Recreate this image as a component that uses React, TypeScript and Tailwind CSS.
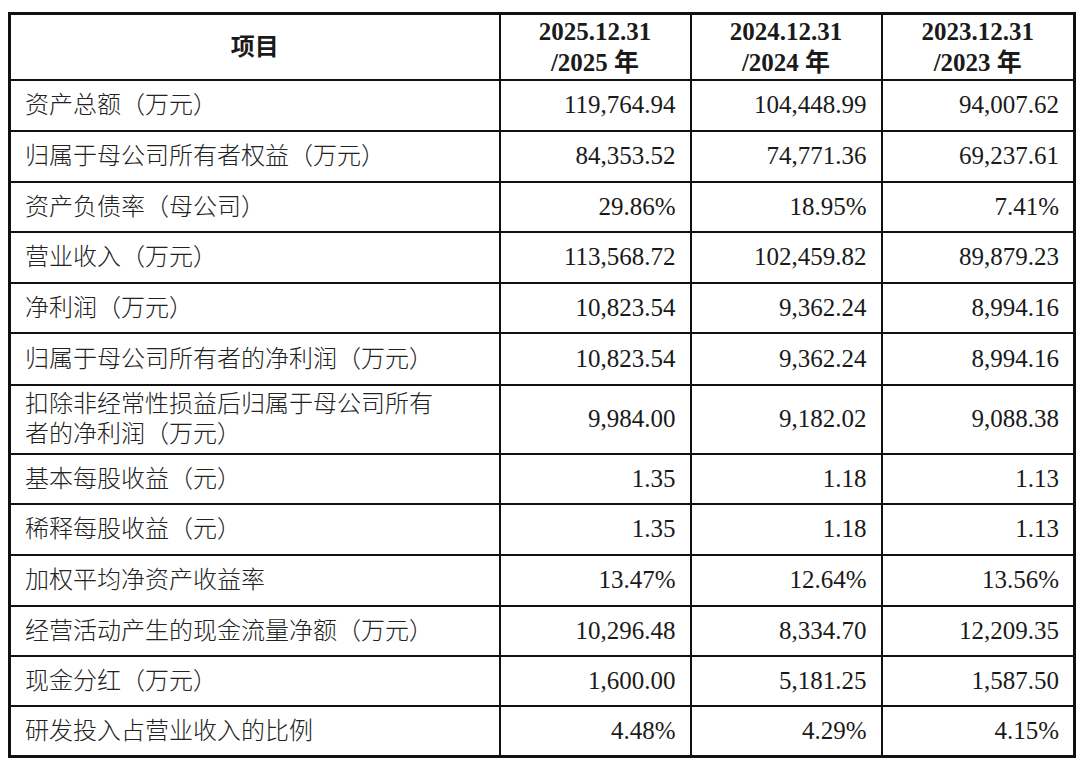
import React from "react";

type Row = { label: string; v: [string, string, string]; h: number };

const rows: Row[] = [
  { label: "资产总额（万元）", v: ["119,764.94", "104,448.99", "94,007.62"], h: 51 },
  { label: "归属于母公司所有者权益（万元）", v: ["84,353.52", "74,771.36", "69,237.61"], h: 51 },
  { label: "资产负债率（母公司）", v: ["29.86%", "18.95%", "7.41%"], h: 50 },
  { label: "营业收入（万元）", v: ["113,568.72", "102,459.82", "89,879.23"], h: 51 },
  { label: "净利润（万元）", v: ["10,823.54", "9,362.24", "8,994.16"], h: 50 },
  { label: "归属于母公司所有者的净利润（万元）", v: ["10,823.54", "9,362.24", "8,994.16"], h: 52 },
  { label: "扣除非经常性损益后归属于母公司所有者的净利润（万元）", v: ["9,984.00", "9,182.02", "9,088.38"], h: 69 },
  { label: "基本每股收益（元）", v: ["1.35", "1.18", "1.13"], h: 50 },
  { label: "稀释每股收益（元）", v: ["1.35", "1.18", "1.13"], h: 51 },
  { label: "加权平均净资产收益率", v: ["13.47%", "12.64%", "13.56%"], h: 51 },
  { label: "经营活动产生的现金流量净额（万元）", v: ["10,296.48", "8,334.70", "12,209.35"], h: 50 },
  { label: "现金分红（万元）", v: ["1,600.00", "5,181.25", "1,587.50"], h: 50 },
  { label: "研发投入占营业收入的比例", v: ["4.48%", "4.29%", "4.15%"], h: 51 },
];

const rowH: Record<number, string> = {
  50: "h-[50px]",
  51: "h-[51px]",
  52: "h-[52px]",
  69: "h-[69px]",
};

const heads = [
  ["2025.12.31", "/2025"],
  ["2024.12.31", "/2024"],
  ["2023.12.31", "/2023"],
];

export default function App() {
  return (
    <div
      className="w-[1080px] h-[772px] bg-white pl-[8px] pt-[12px]"
      style={{ fontFamily: '"Liberation Serif", "Noto Sans CJK SC", serif' }}
    >
      <table className="border-collapse border-[3px] border-[#111] text-[#1a1a1a] w-[1065px] table-fixed">
        <colgroup>
          <col className="w-[490px]" />
          <col className="w-[191px]" />
          <col className="w-[191px]" />
          <col className="w-[193px]" />
        </colgroup>
        <thead>
          <tr className="h-[66px]">
            <th className="border-2 border-[#111] text-[24px] font-bold text-center align-middle">项目</th>
            {heads.map((h) => (
              <th key={h[0]} className="border-2 border-[#111] text-[25px] font-bold text-center align-middle leading-[31px]">
                <div>{h[0]}</div>
                <div>{h[1]} 年</div>
              </th>
            ))}
          </tr>
        </thead>
        <tbody>
          {rows.map((r) => (
            <tr key={r.label} className={rowH[r.h]}>
              <td className="border-2 border-[#111] px-[14px] text-[24px] leading-[30px] font-light text-[#222] align-middle">
                {r.h === 69 ? (
                  <>
                    <div>扣除非经常性损益后归属于母公司所有</div>
                    <div>者的净利润（万元）</div>
                  </>
                ) : (
                  r.label
                )}
              </td>
              {r.v.map((x, i) => (
                <td key={i} className="border-2 border-[#111] pr-[14px] text-right text-[25px] align-middle">
                  {x}
                </td>
              ))}
            </tr>
          ))}
        </tbody>
      </table>
    </div>
  );
}
